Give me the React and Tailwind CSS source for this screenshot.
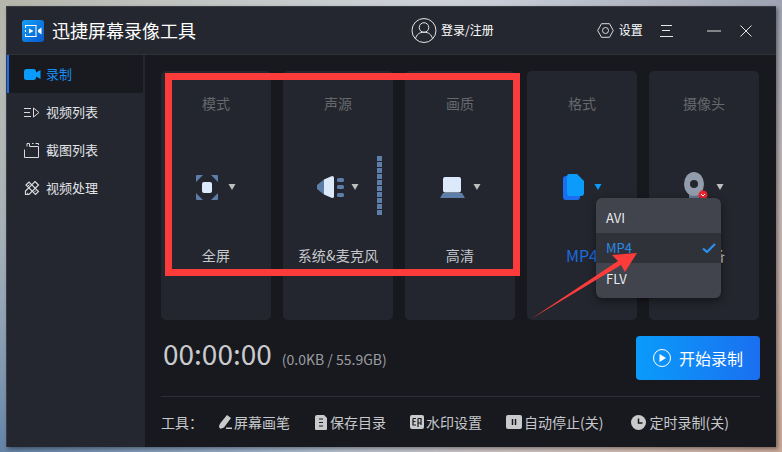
import React from "react";

const FONT = "font-['Noto_Sans_CJK_SC','Noto_Sans',sans-serif]";

const Caret = ({ color = "#bdbec0" }) => (
  <svg width="8" height="6" viewBox="0 0 8 6"><path d="M.5 0H7.500L4 6Z" fill={color} /></svg>
);

const Logo = () => (
  <div className="flex h-[22px] w-[22px] items-center justify-center rounded-[3px] bg-gradient-to-br from-[#1aa0f8] to-[#0a58cc]">
    <svg width="18" height="12" viewBox="0 0 18 12" fill="none">
      <path d="M1 .5H12.5M1 11.5H12.5M1.5 .5V3M1.5 5V7M1.5 9V11.5M12 .5V11.5" stroke="#fff" strokeWidth="1" />
      <path d="M5 3.5 9.5 6 5 8.5Z" fill="#fff" />
      <path d="M14 5 17.5 2.5V9.5L14 7Z" fill="#fff" />
    </svg>
  </div>
);

const CamIcon = () => (
  <svg width="17" height="11" viewBox="0 0 17 11"><rect x="0" y="0" width="12" height="11" rx="2.5" fill="#0a9bfb" /><path d="M11 4 16.5 1V10L11 7Z" fill="#0a9bfb" /></svg>
);
const ListIcon = () => (
  <svg width="16" height="11" viewBox="0 0 16 11" fill="none" stroke="#d8dade"><path d="M0 1.5H7M0 5.5H6M0 9.5H7" /><path d="M9.5 1 15 5.5 9.5 10Z" /></svg>
);
const ShotIcon = () => (
  <svg width="15" height="15" viewBox="0 0 15 15" fill="none" stroke="#d8dade"><path d="M3 3.5V.5H5.5V3.5H14.5V14.5H.5V6.5" /><path d="M8 .5H9.5M11.5 .5H14.5V2" /></svg>
);
const ProcIcon = () => (
  <svg width="16" height="16" viewBox="0 0 16 16" fill="none" stroke="#d8dade" strokeWidth="1.2">
    <path d="M2 5 5 2 14.5 11.5 11.5 14.5Z" />
    <path d="M11 1.5 14.5 5 5 14.5H1.5V11Z" />
    <path d="M4 6 5.500 4.500M10.500 12 12 10.500M3 13 4.500 14" strokeWidth="1" />
  </svg>
);
const UserIcon = () => (
  <svg width="26" height="25" viewBox="0 0 26 25" fill="none" stroke="#e4e5e8" strokeWidth="1">
    <circle cx="13" cy="12.5" r="12" /><circle cx="13" cy="9.5" r="4.8" /><path d="M4.5 21c.8-4.5 4-6.8 8.5-6.8s7.700 2.300 8.500 6.800" />
  </svg>
);
const HexIcon = () => (
  <svg width="17" height="15" viewBox="0 0 17 15" fill="none" stroke="#d8dade"><path d="M4.500 .7H12.500L16.300 7.500 12.500 14.300H4.500L.7 7.500Z" /><circle cx="8.500" cy="7.500" r="3" /></svg>
);
const MenuIcon = () => (
  <svg width="13" height="12" viewBox="0 0 13 12" stroke="#e4e5e8"><path d="M1 .5H12M2 5.500H10M0 11.500H13" /></svg>
);
const MinIcon = () => (
  <svg width="14" height="2" viewBox="0 0 14 2" stroke="#e4e5e8"><path d="M0 1H14" /></svg>
);
const CloseIcon = () => (
  <svg width="12" height="12" viewBox="0 0 12 12" stroke="#e4e5e8"><path d="M.5 .5 11.500 11.500M11.500 .5 .5 11.500" /></svg>
);

const ModeIcon = () => (
  <svg width="22" height="25" viewBox="0 0 22 25">
    <path d="M1 0H7L0 7V1Q0 0 1 0ZM15 0H21Q22 0 22 1V7ZM0 18 7 25H1Q0 25 0 24ZM22 18V24Q22 25 21 25H15Z" fill="#5d7ea8" />
    <rect x="6" y="7" width="10" height="11" rx="2" fill="#dce9fb" />
  </svg>
);
const SoundIcon = () => (
  <svg width="27" height="22" viewBox="0 0 27 22">
    <path d="M7 3.500 0 9Q-1 11 0 13L7 18.500Z" fill="#5d7ea8" />
    <path d="M7 3.500 15 0Q17 0 17 1.500V20.500Q17 22 15 22L7 18.500Z" fill="#dce9fb" />
    <rect x="20" y="2" width="7" height="4" rx="1.500" fill="#5d7ea8" />
    <rect x="20" y="9" width="7" height="4" rx="1.500" fill="#5d7ea8" />
    <rect x="20" y="17" width="7" height="4" rx="1.500" fill="#5d7ea8" />
  </svg>
);
const QualityIcon = () => (
  <svg width="25" height="21" viewBox="0 0 25 21">
    <path d="M3 16H22L25 21H0Z" fill="#5d7ea8" />
    <rect x="3" y="0" width="18" height="15.500" rx="2" fill="#dce9fb" />
  </svg>
);
const FormatIcon = () => (
  <svg width="21" height="26" viewBox="0 0 21 26">
    <rect x="0" y="2" width="17" height="24" rx="3" fill="#1a6ff0" />
    <path d="M6 0H14L21 7V19Q21 22 18 22H7Q4 22 4 19V2Q4 0 6 0Z" fill="#0a9bfb" />
  </svg>
);
const CameraIcon = () => (
  <svg width="24" height="30" viewBox="0 0 24 30">
    <rect x="5" y="22" width="10" height="6" fill="#6b7890" />
    <ellipse cx="10" cy="12" rx="10" ry="12" fill="#929cab" />
    <circle cx="10" cy="12" r="4" fill="#23262e" />
    <circle cx="19" cy="23" r="4.500" fill="#e8262f" />
    <path d="M17 22 19 24 21 22" stroke="#fff" fill="none" />
  </svg>
);

const cards = [
  { top: "模式", icon: <ModeIcon />, gap: "gap-[10px]", label: "全屏" },
  { top: "声源", icon: <SoundIcon />, gap: "gap-[7px]", label: "系统&麦克风", meter: true },
  { top: "画质", icon: <QualityIcon />, gap: "gap-2", label: "高清" },
  { top: "格式", icon: <FormatIcon />, gap: "gap-[10px]", label: "MP4", blue: true },
  { top: "摄像头", icon: <CameraIcon />, gap: "gap-2", label: "无设备" },
];

const Card = ({ top, icon, gap, label, meter, blue }) => (
  <div className="relative flex h-[249px] w-[110px] flex-col items-center rounded-[5px] bg-[#23262e] pt-[22px]">
    <div className="h-5 text-[14px] leading-5 text-[#66686d]">{top}</div>
    <div className={`mt-[61px] flex h-[26px] items-center justify-center ${gap}`}>
      {icon}
      <Caret color={blue ? "#0a9bfb" : "#bdbec0"} />
    </div>
    <div className={`mt-[45px] h-5 whitespace-nowrap leading-5 ${blue ? "text-[16px] text-[#1c6be0]" : "text-[14px] tracking-[0.2px] text-[#c6c8cc]"}`}>{label}</div>
    {meter && (
      <div className="absolute left-[94px] top-[85px] flex flex-col gap-px">
        {Array.from({ length: 10 }).map((_, i) => (
          <div key={i} className="h-[5px] w-[5px] bg-[#5d7ea8]" />
        ))}
      </div>
    )}
  </div>
);

const NavItem = ({ icon, text, active }) => (
  <div className={`flex h-[38px] items-center border-l-2 ${active ? "border-[#1a6ff0] bg-[#191a1f] text-[#1a8cf0]" : "border-transparent text-[#e2e4e8]"}`}>
    <div className="ml-[15px] flex w-[22px] items-center justify-start">{icon}</div>
    <span className="text-[13px]">{text}</span>
  </div>
);

const Tool = ({ icon, text, gap = "gap-[2px]" }) => (
  <div className={`flex items-center text-[14px] text-[#c6c8cc] ${gap}`}>
    {icon}
    <span className="whitespace-nowrap">{text}</span>
  </div>
);

const PenT = () => (
  <svg width="13" height="14" viewBox="0 0 13 14" fill="#c9cacc"><path d="M8 0 12 3 5 12.500Q2 14 1 13.500L0 12Q0 10 1.500 8Z" /><rect x="7" y="12.500" width="6" height="1.500" /></svg>
);
const FileT = () => (
  <svg width="12" height="15" viewBox="0 0 12 15"><path d="M2 0H9L12 3V14Q12 15 11 15H1Q0 15 0 14V2Q0 0 2 0Z" fill="#c9cacc" /><path d="M4 4H8M4 7.500H8M4 11H8" stroke="#18191e" /></svg>
);
const StampT = () => (
  <svg width="14" height="14" viewBox="0 0 14 14"><rect width="14" height="14" rx="2" fill="#c9cacc" /><path d="M3 3.500H6M3 3.500V10H6M3 6.500H5.500M8 3.500H11V10M8 3.500V12M8 8H11" stroke="#18191e" fill="none" strokeWidth="1.200" /></svg>
);
const PauseT = () => (
  <svg width="16" height="14" viewBox="0 0 16 14"><rect width="16" height="14" rx="2" fill="#c9cacc" /><path d="M6.500 4V10M9.500 4V10" stroke="#18191e" strokeWidth="1.500" /></svg>
);
const ClockT = () => (
  <svg width="15" height="15" viewBox="0 0 15 15"><circle cx="7.500" cy="7.500" r="7.500" fill="#c9cacc" /><path d="M7.500 3.500V8H11.500" stroke="#18191e" strokeWidth="1.500" fill="none" /></svg>
);

export default function App() {
  return (
    <div className={`relative h-[452px] w-[782px] overflow-hidden bg-[radial-gradient(circle_at_0_0,#b5b5ab,transparent_55%),radial-gradient(circle_at_100%_100%,#c9a898,transparent_55%),radial-gradient(circle_at_0_100%,#5a7da6,transparent_70%),radial-gradient(circle_at_100%_0,#9aa3b5,transparent_70%)] pl-[6px] pt-[6px] ${FONT}`}>
      <div className="flex h-[441px] w-[770px] flex-col border border-[#3a3d44] border-r-0 border-b-0 shadow-[2px_2px_4px_rgba(0,0,0,0.4)]">
        {/* Title bar */}
        <div className="flex h-[48px] shrink-0 items-center border-b border-[#2f3239] bg-[#24272f]">
          <div className="ml-[15px]"><Logo /></div>
          <span className="ml-2 text-[18px] text-white">迅捷屏幕录像工具</span>
          <div className="ml-[215px]"><UserIcon /></div>
          <span className="-mt-px ml-[4px] text-[12px] text-white">登录/注册</span>
          <div className="ml-[103px]"><HexIcon /></div>
          <span className="-mt-px ml-[5px] text-[12px] text-white">设置</span>
          <div className="ml-[17px]"><MenuIcon /></div>
          <div className="ml-[34px]"><MinIcon /></div>
          <div className="ml-[19px]"><CloseIcon /></div>
        </div>

        <div className="flex min-h-0 flex-1">
          {/* Sidebar */}
          <div className="w-[138px] shrink-0 border-r-2 border-[#24272f] bg-[#24272f]">
            <NavItem active icon={<CamIcon />} text="录制" />
            <NavItem icon={<ListIcon />} text="视频列表" />
            <NavItem icon={<ShotIcon />} text="截图列表" />
            <NavItem icon={<ProcIcon />} text="视频处理" />
          </div>

          {/* Main */}
          <div className="flex min-w-0 flex-1 flex-col bg-[#18191e] pl-[16px] pr-[16px] pt-[16px]">
            <div className="flex gap-3">
              {cards.map((c) => <Card key={c.top} {...c} />)}
            </div>
            <div className="mt-4 flex h-[44px] items-center justify-between">
              <div className="mb-[7px] flex items-baseline pl-[2px]">
                <span className="text-[28px] leading-none text-[#c9cbce]">00:00:00</span>
                <span className="ml-[10px] text-[14px] text-[#9a9ca1]">(0.0KB / 55.9GB)</span>
              </div>
              <div className="flex h-[44px] w-[124px] items-center justify-center gap-2 rounded-[4px] bg-gradient-to-r from-[#0a9bfb] to-[#1a6ff0]">
                <svg width="18" height="18" viewBox="0 0 18 18" fill="none">
                  <circle cx="9" cy="9" r="8.500" stroke="#fff" />
                  <path d="M6.500 5 13 9 6.500 13Z" fill="#fff" />
                </svg>
                <span className="text-[16px] text-white">开始录制</span>
              </div>
            </div>
            <div className="mt-4 h-px bg-[#2e3037]" />
            <div className="flex h-[50px] items-center">
              <span className="w-[58px] text-[14px] text-[#c6c8cc]">工具：</span>
              <div className="flex items-center gap-6">
                <div className="mr-px"><Tool icon={<PenT />} text="屏幕画笔" /></div>
                <Tool icon={<FileT />} text="保存目录" gap="gap-[3px]" />
                <Tool icon={<StampT />} text="水印设置" />
                <Tool icon={<PauseT />} text="自动停止(关)" />
                <div className="ml-1"><Tool icon={<ClockT />} text="定时录制(关)" gap="gap-[3px]" /></div>
              </div>
            </div>
          </div>
        </div>
      </div>

      {/* Red annotation box */}
      <div className="absolute left-[165px] top-[73px] h-[203px] w-[355px] border-[7px] border-[#fc3b3b]" />

      {/* Dropdown menu */}
      <div className="absolute left-[596px] top-[198px] w-[125px] overflow-hidden rounded-[6px] bg-[#41444c] text-[13px] text-[#e8eaee] shadow-[0_3px_8px_rgba(0,0,0,0.45)]">
        <div className="flex h-[35px] items-center pl-[10px] pt-1">AVI</div>
        <div className="flex h-[30px] items-center justify-between bg-[#30323a] pl-[10px] pr-[5px] text-[#2a8ae8]">
          MP4
          <svg width="14" height="10" viewBox="0 0 14 10" fill="none"><path d="M1 5.500 5 9 13 1" stroke="#2a90ee" strokeWidth="2.200" /></svg>
        </div>
        <div className="flex h-[35px] items-center pb-1 pl-[10px]">FLV</div>
      </div>

      {/* Red arrow */}
      <svg className="absolute left-0 top-0" width="782" height="452" viewBox="0 0 782 452">
        <path d="M531 319 618 261 612 255 637 253 625 272 621 265Z" fill="#fc3b3b" />
      </svg>
    </div>
  );
}
